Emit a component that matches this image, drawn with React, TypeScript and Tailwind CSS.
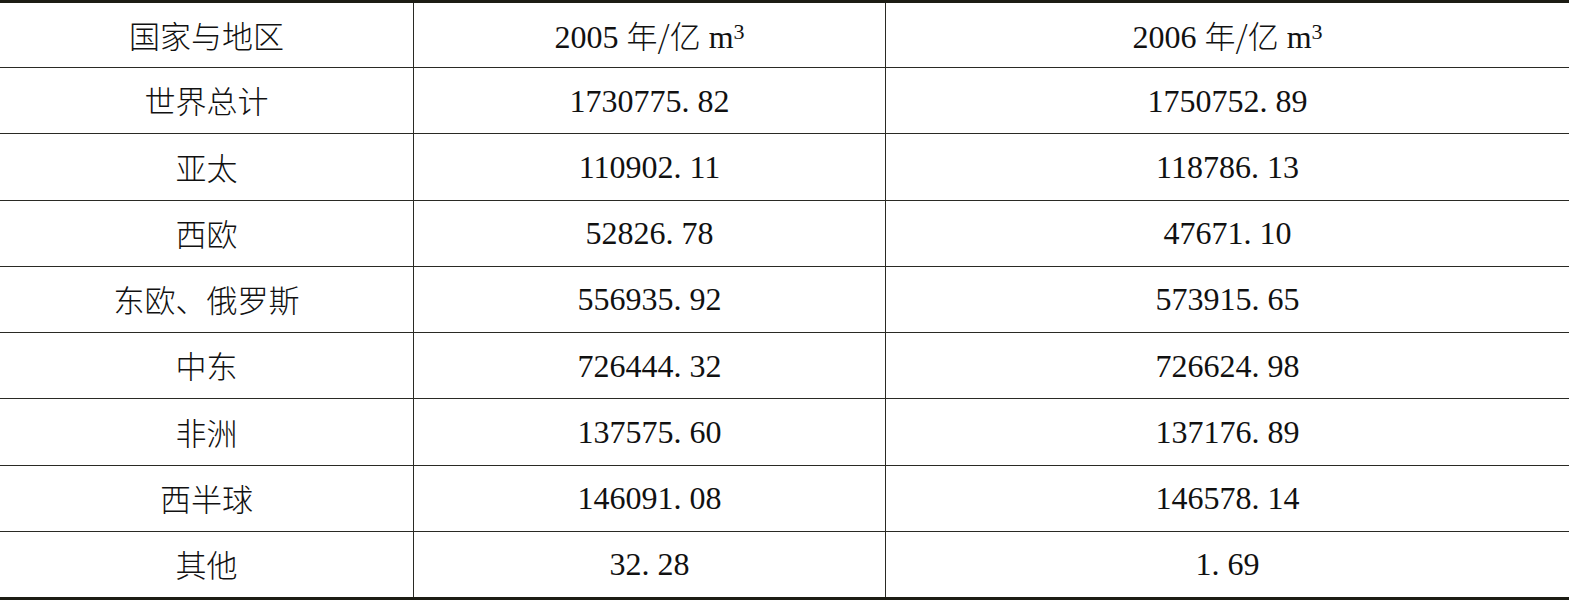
import React from 'react';

const rows = [
  { region: '世界总计', y2005: '1730775. 82', y2006: '1750752. 89' },
  { region: '亚太', y2005: '110902. 11', y2006: '118786. 13' },
  { region: '西欧', y2005: '52826. 78', y2006: '47671. 10' },
  { region: '东欧、俄罗斯', y2005: '556935. 92', y2006: '573915. 65' },
  { region: '中东', y2005: '726444. 32', y2006: '726624. 98' },
  { region: '非洲', y2005: '137575. 60', y2006: '137176. 89' },
  { region: '西半球', y2005: '146091. 08', y2006: '146578. 14' },
  { region: '其他', y2005: '32. 28', y2006: '1. 69' },
];

const cjk = "font-['Noto_Sans_CJK_SC',sans-serif] font-light";
const num = "font-['Liberation_Serif','Noto_Sans_CJK_SC',serif]";

const Unit = ({ year }: { year: string }) => (
  <span className={`${num} text-[32px] leading-none text-[#111]`}>
    {year} <span className={`${cjk} text-[31px]`}>年/亿</span> m<sup className="text-[22px] relative -top-[9px]">3</sup>
  </span>
);

const App = () => {
  return (
    <div className="w-[1571px] h-[600px] bg-white">
      <div className="w-[1569px] h-[600px] flex flex-col border-t-[3px] border-b-[3px] border-[#1c1c14]">
        <div className="grid grid-cols-[414px_472px_1fr] h-[65px] border-b border-[#2a2a24]">
          <div className={`${cjk} text-[31px] text-[#111] flex items-center justify-center border-r border-[#2a2a24]`}>国家与地区</div>
          <div className="flex items-center justify-center border-r border-[#2a2a24] pt-[2px]"><Unit year="2005" /></div>
          <div className="flex items-center justify-center pt-[2px]"><Unit year="2006" /></div>
        </div>
        {rows.map((r, i) => (
          <div
            key={r.region}
            className={`grid grid-cols-[414px_472px_1fr] flex-1 ${i < rows.length - 1 ? 'border-b border-[#2a2a24]' : ''}`}
          >
            <div className={`${cjk} text-[31px] text-[#111] flex items-center justify-center border-r border-[#2a2a24]`}>{r.region}</div>
            <div className={`${num} text-[32px] text-[#111] flex items-center justify-center border-r border-[#2a2a24]`}>{r.y2005}</div>
            <div className={`${num} text-[32px] text-[#111] flex items-center justify-center`}>{r.y2006}</div>
          </div>
        ))}
      </div>
    </div>
  );
};

export default App;
